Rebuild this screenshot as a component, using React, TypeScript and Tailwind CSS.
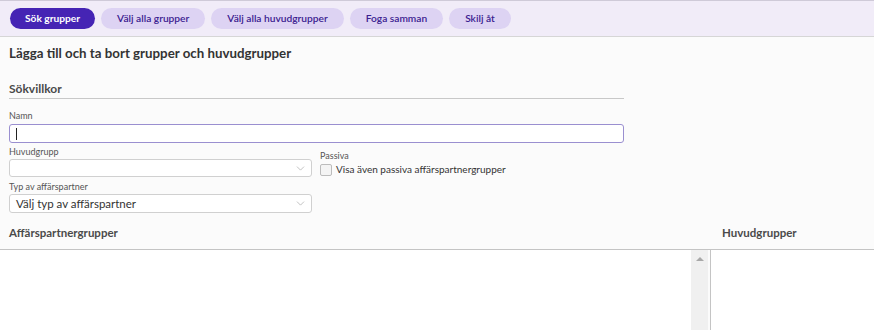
import { ChevronDown } from 'lucide-react';

const FONT = { fontFamily: 'Lato, "Noto Sans", sans-serif' };

const ACTIONS = ['Välj alla grupper', 'Välj alla huvudgrupper', 'Foga samman', 'Skilj åt'];

function Select({ value, h }: { value?: string; h: string }) {
  return (
    <div className={`${h} w-[303px] bg-white border border-[#d0d0d0] rounded-[3px] flex items-center justify-between pl-[6px] pr-[4px]`}>
      <span className="text-[11.5px] text-[#333]">{value ?? ''}</span>
      <ChevronDown className="w-[13px] h-[13px] text-[#aaa]" strokeWidth={1.3} />
    </div>
  );
}

export default function App() {
  return (
    <div className="w-[874px] h-[330px] overflow-hidden bg-[#fbfbfb] text-[#333]" style={FONT}>
      {/* toolbar */}
      <div className="h-[37px] bg-[#f1ecf8] border-t border-[#cfcad8] border-b border-b-[#d6d6d6] flex items-center gap-[6px] px-[10px]">
        <button className="h-[21px] px-[15px] rounded-full bg-[#4524b4] text-white text-[10.2px] font-bold">
          Sök grupper
        </button>
        {ACTIONS.map(a => (
          <button
            key={a}
            className="h-[21px] px-[16px] rounded-full bg-[#ddd3f3] text-[#3b2190] text-[10.2px] font-semibold"
          >
            {a}
          </button>
        ))}
      </div>

      <div className="px-[9px]">
        <h1 className="text-[13.3px] font-bold text-[#333] mt-[7px] leading-[18px]">
          Lägga till och ta bort grupper och huvudgrupper
        </h1>

        <div className="w-[615px] mt-[20px]">
          <div className="text-[12px] font-bold text-[#4a4a4a] leading-[14px] pb-[2px] border-b border-[#c8c8c8]">
            Sökvillkor
          </div>

          <div className="mt-[11px] text-[9px] text-[#555] leading-[12px]">Namn</div>
          <div className="mt-[2px] h-[19px] bg-white border border-[#9a8fd0] rounded-[3px] flex items-center pl-[6px]">
            <span className="w-px h-[12px] bg-[#222]" />
          </div>

          <div className="flex gap-[8px] mt-[3px]">
            <div>
              <div className="text-[9px] text-[#555] leading-[12px] mb-[1px]">Huvudgrupp</div>
              <Select h="h-[18px]" />
              <div className="text-[9px] text-[#555] leading-[12px] mt-[4px] mb-[1px]">Typ av affärspartner</div>
              <Select h="h-[19px]" value="Välj typ av affärspartner" />
            </div>
            <div className="pt-[4px]">
              <div className="text-[9px] text-[#555] leading-[12px]">Passiva</div>
              <label className="flex items-center gap-[4px]">
                <span className="w-[12px] h-[12px] border border-[#bcbcbc] rounded-[2px] bg-[#f4f4f4]" />
                <span className="text-[10px] text-[#333]">Visa även passiva affärspartnergrupper</span>
              </label>
            </div>
          </div>
        </div>
      </div>

      {/* result lists */}
      <div className="mt-[3px] flex h-[34px] items-center border-b border-[#c4c4c4]">
        <div className="w-[711px] pl-[9px] text-[11.5px] font-bold text-[#4a4a4a]">Affärspartnergrupper</div>
        <div className="pl-[11px] text-[11.5px] font-bold text-[#4a4a4a]">Huvudgrupper</div>
      </div>
      <div className="flex h-[100px]">
        <div className="w-[691px] bg-white" />
        <div className="w-[17px] bg-[#f0f0f0] flex justify-center pt-[7px]">
          <span className="w-0 h-0 border-l-[4px] border-r-[4px] border-b-[4px] border-l-transparent border-r-transparent border-b-[#a8a8a8]" />
        </div>
        <div className="w-[3px] bg-[#fbfbfb] border-r border-[#c4c4c4]" />
        <div className="flex-1 bg-white" />
      </div>
    </div>
  );
}
